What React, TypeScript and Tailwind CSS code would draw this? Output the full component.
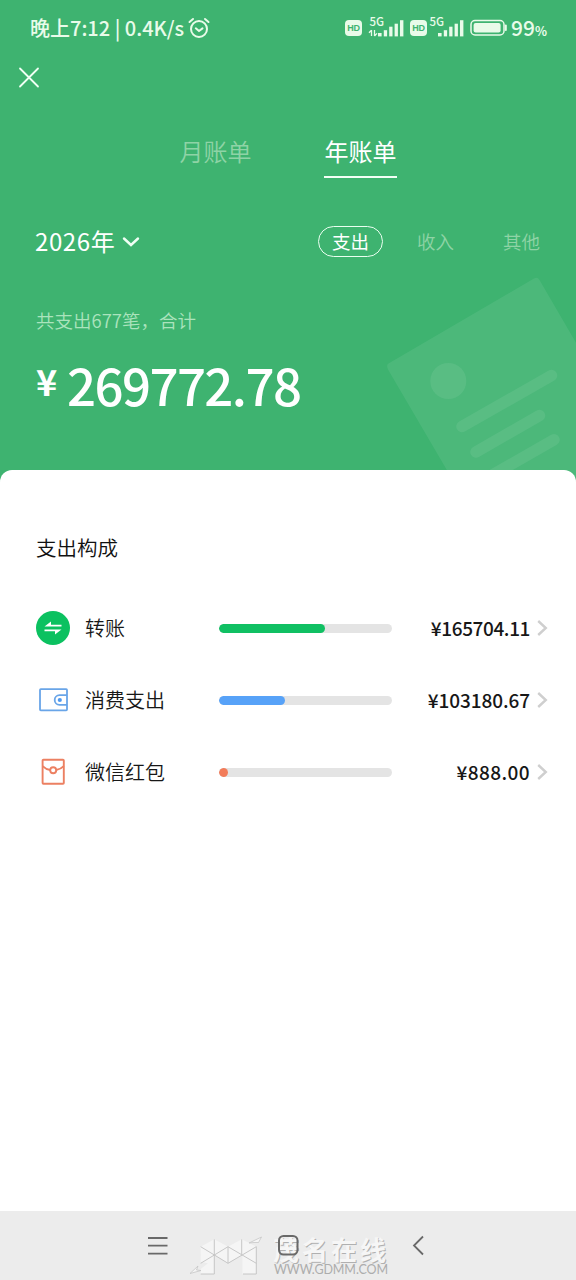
import React from "react";

interface ExpenseItem {
  id: string;
  label: string;
  amount: string;
  amountClass: string;
  percent: number;
  barClass: string;
  icon: React.ReactNode;
}

const TransferIcon = () => (
  <svg width="34" height="34" viewBox="0 0 34 34">
    <circle cx="17" cy="17" r="17" fill="#0bc160" />
    <path d="M8.5 15.5L15 10.5V13.8H25.5V15.5ZM25.5 18.5L19 23.4V20.2H8.5V18.5Z" fill="#fff" />
  </svg>
);

const WalletIcon = () => (
  <svg width="34" height="34" viewBox="0 0 34 34" fill="none" stroke="#69a5e8" strokeWidth="1.8">
    <rect x="4" y="6.2" width="27" height="21.2" rx="0.8" />
    <path d="M31 12.2H23.5a4.8 4.8 0 0 0 0 9.6H31" />
    <circle cx="23.8" cy="17" r="2.1" fill="#4f9af0" stroke="none" />
  </svg>
);

const RedPacketIcon = () => (
  <svg width="34" height="34" viewBox="0 0 34 34" fill="none" stroke="#ec8062" strokeWidth="1.9">
    <rect x="6.6" y="4.8" width="21.2" height="24" rx="0.8" />
    <path d="M6.6 11.2C8.8 13.4 11 14.6 14.2 15M27.8 11.2C25.6 13.4 23.2 14.6 20.2 15" />
    <circle cx="17.2" cy="15.2" r="3" />
  </svg>
);

const items: ExpenseItem[] = [
  {
    id: "transfer",
    label: "转账",
    amount: "¥165704.11",
    amountClass: "tracking-[-0.4px]",
    percent: 61.4,
    barClass: "bg-[#10c063]",
    icon: <TransferIcon />,
  },
  {
    id: "spending",
    label: "消费支出",
    amount: "¥103180.67",
    amountClass: "tracking-[-0.1px]",
    percent: 38.3,
    barClass: "bg-[#57a2f8]",
    icon: <WalletIcon />,
  },
  {
    id: "packet",
    label: "微信红包",
    amount: "¥888.00",
    amountClass: "tracking-[0.4px]",
    percent: 5.4,
    barClass: "bg-[#f27c5a]",
    icon: <RedPacketIcon />,
  },
];

const SignalIcon = ({ active }: { active?: boolean }) => (
  <svg className="shrink-0 overflow-visible" width="36" height="22" viewBox="0 0 36 22" fill="#e9fbe9">
    <text x="0.5" y="9" fontSize="11.5" fontWeight="500" fontFamily="Noto Sans CJK SC, sans-serif">5G</text>
    <rect x="9" y="16" width="3.6" height="3.4" />
    <rect x="14.8" y="13.2" width="3.3" height="6.2" />
    <rect x="20.2" y="9.7" width="3.3" height="9.7" />
    <rect x="25.6" y="6.7" width="3.3" height="12.7" />
    <rect x="31" y="3.2" width="3.4" height="16.2" />
    {active && <path d="M2.5 13v6M0 15.8l2.5-2.6M5.5 13v6M5.5 19L8 16.4" stroke="#e9fbe9" strokeWidth="1.3" fill="none" />}
  </svg>
);

const HdBadge = () => (
  <span className="flex h-4 w-[17px] shrink-0 items-center justify-center rounded-[4px] bg-[#e9fbe9] font-['Liberation_Sans',sans-serif] text-[9px] leading-none font-bold tracking-[-0.3px] text-[#3eb370]">
    HD
  </span>
);

function StatusBar() {
  return (
    <div className="flex h-14 items-center pl-[30px] text-[#e9fbe9]">
      <span className="w-[157px] whitespace-nowrap text-[20px] leading-none font-medium">晚上7:12 | 0.4K/s</span>
      <svg className="ml-px" width="22" height="22" viewBox="0 0 22 22" fill="none" stroke="#e9fbe9" strokeWidth="2" strokeLinecap="round">
        <circle cx="11" cy="12" r="8" />
        <path d="M1.5 5L5 2M20.5 5L17 2M7.8 11.3l3.2 2.7 3.5-2.6" />
      </svg>
      <div className="ml-[135px] flex items-center">
        <HdBadge />
        <div className="ml-[7px]"><SignalIcon active /></div>
        <div className="ml-[5px]"><HdBadge /></div>
        <div className="ml-[2px]"><SignalIcon /></div>
        <svg className="ml-[5px] shrink-0" width="38" height="18" viewBox="0 0 38 18">
          <rect x="1" y="1.6" width="33" height="14.4" rx="4" fill="none" stroke="#e9fbe9" strokeWidth="1.5" />
          <rect x="3.6" y="4.1" width="27" height="9.4" rx="2" fill="#e9fbe9" />
          <path d="M35.8 6.6v4.4" stroke="#e9fbe9" strokeWidth="2" strokeLinecap="round" />
        </svg>
        <span className="ml-[3px] pb-[2px] text-[21px] leading-none font-medium">
          99<span className="text-[12.5px] font-bold">%</span>
        </span>
      </div>
    </div>
  );
}

const BillIllustration = () => (
  <svg className="absolute right-0 top-[265px]" width="200" height="215" viewBox="0 0 200 215">
    <path d="M12.5 98.5L158 13.5Q161.5 11.5 163.5 15L260 181 130 306 12 104.5Q10 100 12.5 98.5Z" fill="#fff" fillOpacity="0.075" />
    <g stroke="#fff" strokeOpacity="0.075" strokeWidth="11.5" strokeLinecap="round">
      <path d="M86 161.5L175.5 110.5M100 187L163.5 150.5M112 212.5L178 174.8" />
    </g>
    <circle cx="72.3" cy="116" r="18" fill="#fff" fillOpacity="0.075" />
  </svg>
);

const SiteWatermark = () => (
  <div className="absolute top-[24px] left-[190px] flex w-[204px] font-bold">
    <svg className="shrink-0" width="83" height="45" viewBox="0 0 83 45">
      <path d="M10.7 11.7L24.3 4.3 38 11.7 51.7 4.3 66.3 11.7V39H52.5V19.3L38 28.3 24.3 19.3V39H10.7V34L18 28.3 10.7 27Z" fill="#f5f5f5" />
      <path
        d="M10.7 11.7L38 28.3 66.3 11.7M10.7 28.3L38 11.7 66.3 28.3M24.3 4.3V39H10.7M38 11.7V28.3M51.7 4.3V19.3M66.3 11.7V39H53"
        fill="none"
        stroke="#c2c2c2"
        strokeWidth="0.9"
      />
      <path d="M59 8L71.5 2 68.5 7.5 64 7.5ZM0 38.5L8 31 6.5 35 11 35.5Z" fill="#f5f5f5" stroke="#c2c2c2" strokeWidth="0.7" />
    </svg>
    <div>
      <div className="h-[29px] text-[26px] leading-[28px] tracking-[3px] whitespace-nowrap text-[#f6f6f6] [text-shadow:1px_1px_0_#b0b0b0]">
        茂名在线
      </div>
      <div className="h-[12px] pl-px font-['Lato',sans-serif] text-[12.5px] leading-[12px] font-normal tracking-[-0.1px] whitespace-nowrap text-[#adadad]">
        WWW.GDMM.COM
      </div>
    </div>
  </div>
);

function BillHeader() {
  return (
    <header className="relative h-[490px] shrink-0 overflow-hidden bg-[#3eb370] text-white">
      <BillIllustration />
      <StatusBar />
      <div className="flex h-[42px] items-center pl-[18px]">
        <svg width="22" height="22" viewBox="0 0 22 22" stroke="#f0fff4" strokeWidth="1.8" strokeLinecap="round">
          <path d="M2 2.5l18 18M20 2.5L2 20.5" />
        </svg>
      </div>

      <nav className="flex h-20 gap-[72px] pl-[179px] text-2xl font-[350]">
        <button className="w-[73px] border-b-2 border-transparent pt-[27px] whitespace-nowrap text-[#8fd3a6]">月账单</button>
        <button className="w-[73px] border-b-2 border-[#f3fff6] pt-[27px] font-normal whitespace-nowrap">年账单</button>
      </nav>

      <div className="mt-[41px] flex h-11 items-center pl-[35px]">
        <button className="flex w-[283px] items-center gap-[7px] text-[24px] leading-none tracking-[0.6px]">
          2026年
          <svg className="mt-px" width="18" height="12" viewBox="0 0 18 12" fill="none" stroke="#f0fff4" strokeWidth="2.4" strokeLinecap="round">
            <path d="M2 2.5l7 6.5 7-6.5" />
          </svg>
        </button>
        <button className="flex h-[31px] w-[65px] items-center justify-center rounded-full border border-[#eafff0] text-[18.5px] leading-none">
          支出
        </button>
        <button className="ml-[34px] pt-px text-[18.5px] leading-none font-[350] text-[#8fd3a6]">收入</button>
        <button className="ml-[49px] pt-px text-[18.5px] leading-none font-[350] text-[#8fd3a6]">其他</button>
      </div>

      <p className="mt-[43px] pl-9 text-[18.5px] leading-[28px] font-[350] text-[#abe3bd]">共支出677笔，合计</p>
      <div className="mt-[20px] flex h-[60px] items-center pl-9 font-medium">
        <span className="mb-2 w-[31px] text-[36px] leading-none font-bold">¥</span>
        <span className="text-[51px] leading-none tracking-[-1.6px]">269772.78</span>
      </div>
    </header>
  );
}

function ExpenseRow({ item }: { item: ExpenseItem }) {
  return (
    <li className="flex h-[72px] items-center pr-7 pl-9">
      {item.icon}
      <span className="ml-[15px] w-[134px] text-[20px] font-[350] text-[#171717]">{item.label}</span>
      <div className="h-[9px] w-[173px] overflow-hidden rounded-full bg-[#e4e4e4]">
        <div className={`h-full rounded-full ${item.barClass}`} style={{ width: `${item.percent}%` }} />
      </div>
      <span className={`ml-auto pb-px text-[19px] leading-none font-medium text-[#171717] ${item.amountClass}`}>{item.amount}</span>
      <svg className="ml-[7px]" width="11" height="16" viewBox="0 0 11 16" fill="none" stroke="#cfcfcf" strokeWidth="2.4">
        <path d="M1.2 1L8.8 8l-7.6 7" />
      </svg>
    </li>
  );
}

function NavigationBar() {
  return (
    <footer className="relative flex h-[69px] shrink-0 bg-[#ececec]">
      <SiteWatermark />
      <svg className="relative mt-6 ml-[147px]" width="22" height="22" viewBox="0 0 22 22" stroke="#696969" strokeWidth="1.8">
        <path d="M1 3h19.5M1 10.6h19.5M1 18.6h19.5" />
      </svg>
      <svg className="relative mt-6 ml-[108px]" width="22" height="22" viewBox="0 0 22 22" fill="none" stroke="#696969" strokeWidth="2">
        <rect x="2" y="1" width="18.5" height="18.5" rx="4.5" />
      </svg>
      <svg className="relative mt-6 ml-[112px]" width="14" height="22" viewBox="0 0 14 22" fill="none" stroke="#696969" strokeWidth="1.8">
        <path d="M12 1.5L3 10.5l9 9" />
      </svg>
    </footer>
  );
}

export default function App() {
  return (
    <div className="flex h-[1280px] w-[576px] flex-col overflow-hidden bg-white font-['Noto_Sans_CJK_SC',sans-serif]">
      <BillHeader />
      <main className="relative -mt-5 flex-1 rounded-t-[12px] bg-white">
        <h2 className="pt-[63px] pl-9 text-[20.5px] leading-7 font-[350] text-[#111111]">支出构成</h2>
        <ul className="mt-[31px]">
          {items.map((item) => (
            <ExpenseRow key={item.id} item={item} />
          ))}
        </ul>
      </main>
      <NavigationBar />
    </div>
  );
}
